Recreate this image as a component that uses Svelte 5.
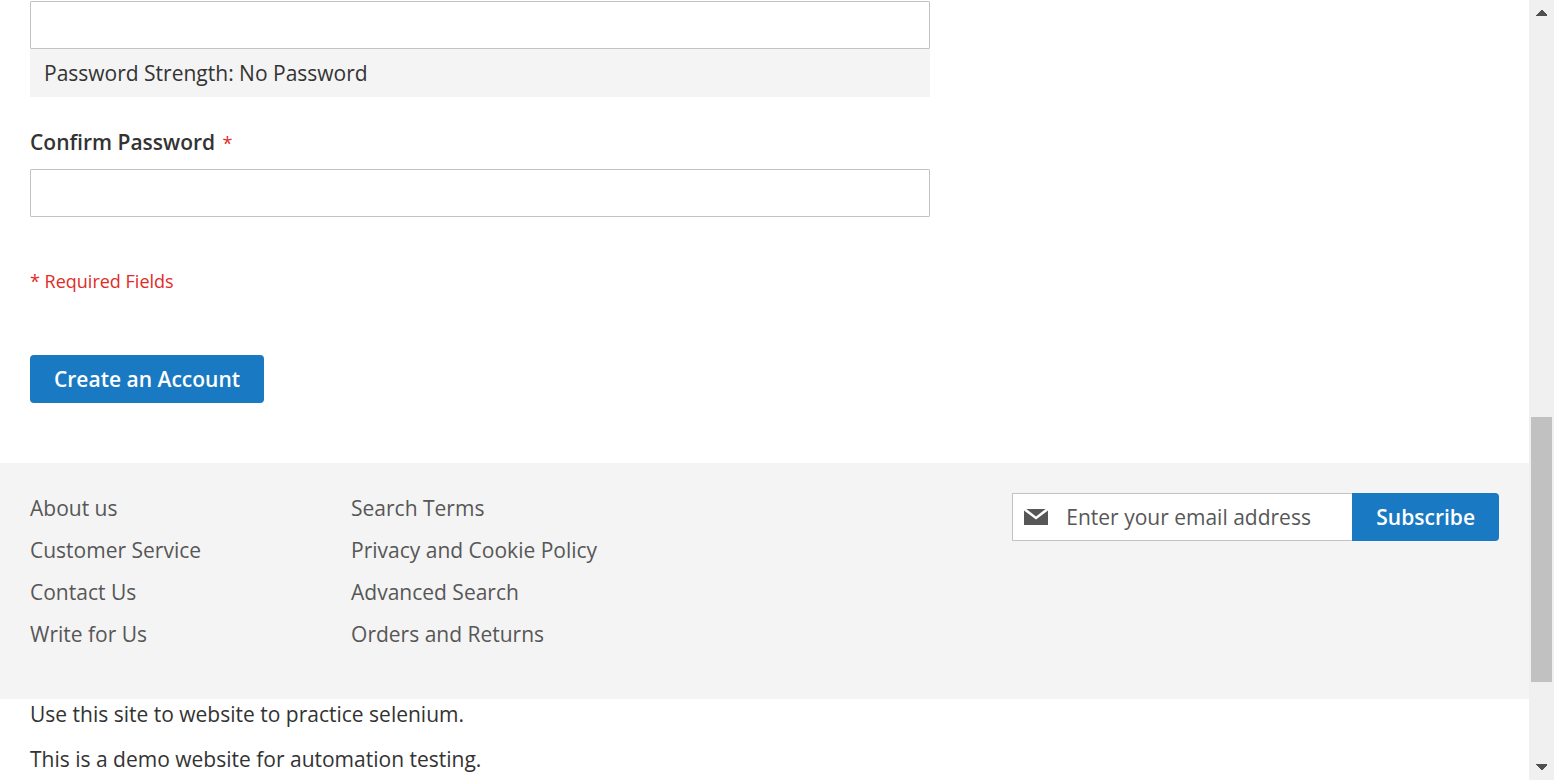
<script>
  const linkColumns = [
    ['About us', 'Customer Service', 'Contact Us', 'Write for Us'],
    ['Search Terms', 'Privacy and Cookie Policy', 'Advanced Search', 'Orders and Returns']
  ];
  let password = $state('');
  let confirmation = $state('');
  let email = $state('');
</script>

<div class="window">
  <div class="page">
    <main>
      <form onsubmit={(e) => e.preventDefault()}>
        <input type="password" aria-label="Password" bind:value={password} />
        <div class="strength">Password Strength: <span>No Password</span></div>
        <label for="confirmation">Confirm Password <span class="star">*</span></label>
        <input id="confirmation" type="password" bind:value={confirmation} />
        <p class="required">* Required Fields</p>
        <button class="primary" type="submit">Create an Account</button>
      </form>
    </main>

    <footer>
      <nav>
        {#each linkColumns as column}
          <ul>
            {#each column as label}
              <li><a href="#top">{label}</a></li>
            {/each}
          </ul>
        {/each}
      </nav>
      <form class="newsletter" onsubmit={(e) => e.preventDefault()}>
        <div class="email">
          <svg viewBox="0 0 24 16" width="24" height="16" aria-hidden="true">
            <path d="M2.4 0H21.6L12 7.4ZM0 1.4L12 10.4L24 1.4V16H0Z" fill="#575757" />
          </svg>
          <input type="email" aria-label="Email address" placeholder="Enter your email address" bind:value={email} />
        </div>
        <button class="primary" type="submit">Subscribe</button>
      </form>
    </footer>

    <div class="notes">
      <p>Use this site to website to practice selenium.</p>
      <p>This is a demo website for automation testing.</p>
    </div>
  </div>

  <div class="scrollbar" aria-hidden="true">
    <svg viewBox="0 0 11 6" width="11" height="6" shape-rendering="crispEdges"><path d="M0 6V5L5 0H6L11 5V6Z" fill="#505050" /></svg>
    <div class="track"><div class="thumb"></div></div>
    <svg viewBox="0 0 11 6" width="11" height="6" shape-rendering="crispEdges"><path d="M0 0V1L5 6H6L11 1V0Z" fill="#505050" /></svg>
  </div>
</div>

<style>
  :global(body) {
    margin: 0;
    background: #fff;
  }
  .window {
    display: grid;
    grid-template-columns: minmax(0, 1fr) 25px;
    min-height: 100vh;
    font-family: 'Open Sans', 'Noto Sans', sans-serif;
    font-size: 21px;
    line-height: 30px;
    color: #333;
  }
  main {
    padding: 1px 30px 60px;
  }
  main form {
    display: flex;
    flex-direction: column;
    max-width: 900px;
  }
  input {
    box-sizing: border-box;
    width: 100%;
    height: 48px;
    padding: 0 14px;
    border: 1px solid #c2c2c2;
    border-radius: 1px;
    background: #fff;
    color: #333;
    font: inherit;
  }
  .strength {
    padding: 9px 14px;
    background: #f4f4f4;
  }
  label {
    margin: 30px 0 12px;
    font-weight: 600;
  }
  .star {
    margin-left: 2px;
    color: #e02b27;
    font-size: 18px;
    font-weight: 400;
    line-height: 1;
  }
  .required {
    margin: 49px 0 59px;
    color: #e02b27;
    font-size: 18px;
  }
  .primary {
    align-self: flex-start;
    height: 48px;
    padding: 0 24px;
    border: 0;
    border-radius: 4px;
    background: #1979c3;
    color: #fff;
    font: inherit;
    font-weight: 600;
    cursor: pointer;
  }
  footer {
    display: flex;
    flex-wrap: wrap;
    justify-content: space-between;
    gap: 30px;
    padding: 30px 30px 38px;
    background: #f4f4f4;
  }
  nav {
    display: flex;
    gap: 150px;
  }
  ul {
    margin: 0;
    padding: 0;
    list-style: none;
  }
  li {
    margin-bottom: 12px;
  }
  a {
    color: #575757;
    text-decoration: none;
  }
  a:hover {
    text-decoration: underline;
  }
  .newsletter {
    display: flex;
  }
  .email {
    display: grid;
    align-items: center;
    width: 340px;
    height: 48px;
  }
  .email svg,
  .email input {
    grid-area: 1 / 1;
  }
  .email svg {
    z-index: 1;
    margin-left: 12px;
  }
  .email input {
    padding-left: 53px;
    border-right: 0;
  }
  .email input::placeholder {
    color: #575757;
    opacity: 1;
  }
  .newsletter .primary {
    border-radius: 0 4px 4px 0;
  }
  .notes {
    padding: 0 30px;
  }
  .notes p {
    margin: 0 0 15px;
  }
  .notes p:last-child {
    margin-bottom: 0;
  }
  .scrollbar {
    display: flex;
    flex-direction: column;
    align-items: center;
    box-sizing: border-box;
    padding: 10px 2px;
    background: #f0f0f0;
  }
  .track {
    display: grid;
    flex: 1;
    grid-template-rows: 401fr 265fr 82fr;
    align-self: stretch;
  }
  .thumb {
    grid-row: 2;
    background: #c1c1c1;
  }
</style>
